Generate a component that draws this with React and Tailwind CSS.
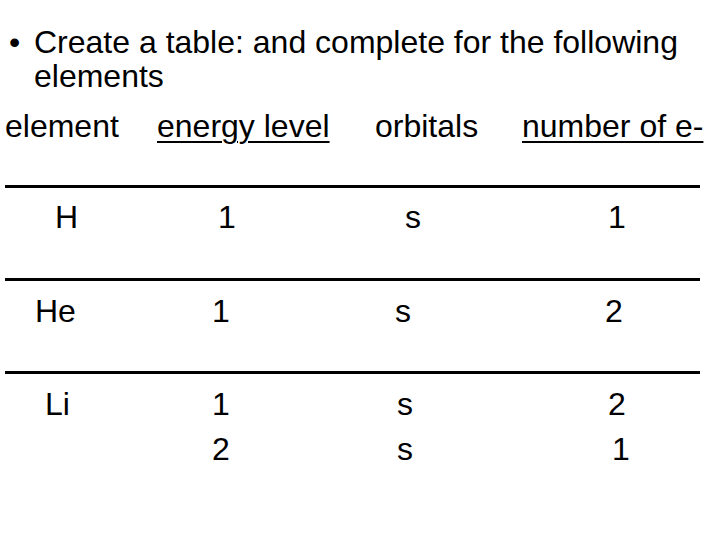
import React from 'react';

const rows = [
  {
    pad: 'pt-[12px] h-[90px]',
    lines: [
      [
        { text: 'H', cls: 'pl-[55px]' },
        { text: '1', cls: 'pl-[13px]' },
        { text: 's', cls: 'pl-[15px]' },
        { text: '1', cls: 'pl-[13px]' },
      ],
    ],
  },
  {
    pad: 'pt-[13px] h-[90px]',
    lines: [
      [
        { text: 'He', cls: 'pl-[35px]' },
        { text: '1', cls: 'pl-[7px]' },
        { text: 's', cls: 'pl-[5px]' },
        { text: '2', cls: 'pl-[10px]' },
      ],
    ],
  },
  {
    pad: 'pt-[13px]',
    lines: [
      [
        { text: 'Li', cls: 'pl-[45px]' },
        { text: '1', cls: 'pl-[7px]' },
        { text: 's', cls: 'pl-[7px]' },
        { text: '2', cls: 'pl-[13px]' },
      ],
      [
        { text: '', cls: '' },
        { text: '2', cls: 'pl-[7px]' },
        { text: 's', cls: 'pl-[7px]' },
        { text: '1', cls: 'pl-[17px]' },
      ],
    ],
  },
];

function Rule() {
  return <div className="ml-[5px] w-[695px] h-[3px] bg-black" />;
}

export default function App() {
  return (
    <div
      className="w-[720px] h-[540px] bg-white text-black overflow-hidden"
      style={{ fontFamily: '"Liberation Sans", Arial, sans-serif' }}
    >
      <div className="pt-[25px] text-[32px] leading-[34px]">
        <div className="flex">
          <span className="w-[34px] pl-[9px]">•</span>
          <span>
            Create a table: and complete for the following
            <br />
            elements
          </span>
        </div>

        <div className="mt-[16px] grid grid-cols-[152px_218px_147px_1fr] pl-[5px]">
          <span>element</span>
          <span><span className="underline decoration-2 underline-offset-4">energy level</span></span>
          <span>orbitals</span>
          <span className="whitespace-nowrap"><span className="underline decoration-2 underline-offset-4">number of e-</span></span>
        </div>
      </div>

      <div className="mt-[42px] text-[32px] leading-[34px]">
        <Rule />
        {rows.map((row, i) => (
          <React.Fragment key={i}>
            <div className={row.pad}>
              {row.lines.map((line, j) => (
                <div
                  key={j}
                  className={`grid grid-cols-[205px_185px_205px_1fr] ${j > 0 ? 'mt-[11px]' : ''}`}
                >
                  {line.map((cell, k) => (
                    <span key={k} className={cell.cls}>
                      {cell.text}
                    </span>
                  ))}
                </div>
              ))}
            </div>
            {i < rows.length - 1 && <Rule />}
          </React.Fragment>
        ))}
      </div>
    </div>
  );
}
